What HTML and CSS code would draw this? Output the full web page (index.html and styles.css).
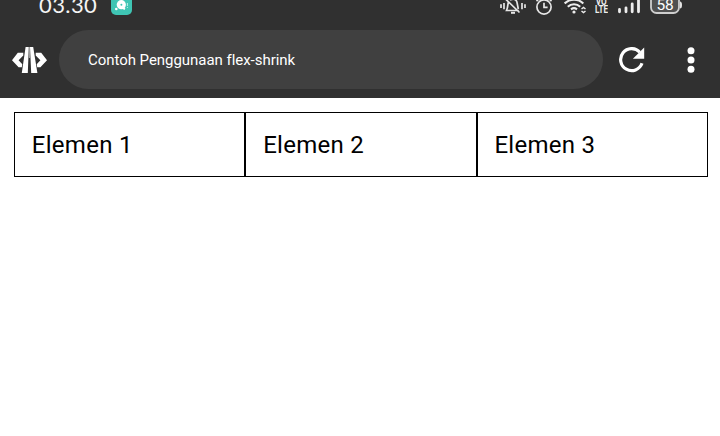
FILE: index.html
```html
<!DOCTYPE html>
<html lang="id">
<head>
<meta charset="utf-8">
<title>Contoh Penggunaan flex-shrink</title>
<link rel="stylesheet" href="styles.css">
</head>
<body>
<header class="browser">
  <div class="status">
    <span class="clock">03.30</span>
    <svg class="app" width="21" height="15" viewBox="0 0 21 15">
      <path d="M0-6H21V10a5 5 0 0 1-5 5H5a5 5 0 0 1-5-5Z" fill="#3fc5b4"/>
      <circle cx="10.3" cy="4.7" r="4.6" fill="#fff"/>
      <path d="M12 8l2 1" stroke="#fff" stroke-width="2"/>
      <circle cx="5.3" cy="9" r="1.3" fill="#fff"/>
      <circle cx="10.4" cy="4.7" r="1" fill="#3fc5b4"/>
      <path d="M16.4 3v3M16.4 7v1" stroke="#bceee5" stroke-width="1"/>
    </svg>
    <div class="indicators">
      <svg width="26" height="20" viewBox="0 0 26 20" fill="none" stroke="#e6e6e6" stroke-width="1.7">
        <path d="M8.5 1.5C7.8 3 8.2 7 6.5 10.5H18.8M10 0C15-2 17 0 17.3 4l1 5M5.5-1 19.5 12.5"/>
        <path d="M11 12.8h4" stroke-width="2"/>
        <path d="M1 4.2v3.7M4 3v6.3M22 3v6.3M25 4.2v3.7"/>
      </svg>
      <svg class="alarm" width="16" height="20" viewBox="0 0 16 20" fill="none" stroke="#e6e6e6" stroke-width="1.7">
        <circle cx="8" cy="7" r="7.1"/>
        <path d="M8 2.8v4.5h3.6M.5 1.2 3-1.2M15.5 1.2 13-1.2"/>
      </svg>
      <svg class="wifi" width="23" height="20" viewBox="0 0 23 20" fill="none" stroke="#ededed" stroke-width="2.1">
        <path d="M.7 3.4C5.8-1.5 14.2-1.5 19.3 3.4M3.8 6.7c3.4-3.3 9-3.3 12.4 0M7 9.3c1.8-1.4 4.2-1.4 6 0"/>
        <circle cx="10" cy="12" r="1.6" fill="#ededed" stroke="none"/>
        <path d="m17.5 9 2-1.6 2 1.6M17.5 11l2 1.6 2-1.6" stroke-width="1.5"/>
      </svg>
      <svg class="volte" width="13" height="20" viewBox="0 0 13 20" fill="#ededed">
        <text x="0.7" y="4.6" textLength="11" lengthAdjust="spacingAndGlyphs">VO</text>
        <text x="0" y="13.4" textLength="13" lengthAdjust="spacingAndGlyphs">LTE</text>
      </svg>
      <svg class="signal" width="22" height="20" viewBox="0 0 22 20" stroke="#ededed" stroke-width="2.8" stroke-linecap="round">
        <path d="M1.5 9.5v2.3M8 7.8v4M14.2 3.8v8M20.5 0v11.8"/>
      </svg>
      <svg class="battery" width="32" height="20" viewBox="0 0 32 20">
        <rect x="1" y="-5" width="28" height="18" rx="5.5" fill="#505050" stroke="#cecece" stroke-width="1.8"/>
        <path d="M30 1.5q2 0 2 3.5t-2 3.5Z" fill="#e3e3e3"/>
        <text x="6.4" y="9.8" textLength="17.4" lengthAdjust="spacingAndGlyphs">58</text>
      </svg>
    </div>
  </div>
  <div class="toolbar">
    <svg class="logo" width="35" height="28" viewBox="0 0 35 28">
      <path d="M5.8 6.8H11.3V9.4L6.6 14.2L10.3 18.2L9.8 21.2H6.6L0 14.2ZM29.2 6.8H23.7V9.4L28.4 14.2L24.7 18.2L25.2 21.2H28.4L35 14.2Z" fill="#fff"/>
      <path d="M13.6 1H16.8L15.8 27H9.8ZM18 1H21.2L25.4 27H19.2Z" fill="#fff"/>
      <path d="M17.4 1V12" stroke="#aaa" stroke-width="1"/>
    </svg>
    <div class="address">Contoh Penggunaan flex-shrink</div>
    <svg class="reload" width="26" height="26" viewBox="0 0 26 26">
      <path d="M20.8 5.2A11 11 0 1 0 23 16.3" fill="none" stroke="#fff" stroke-width="3.2"/>
      <path d="M25.2.5V11.8H13.9Z" fill="#fff"/>
    </svg>
    <svg class="menu" width="8" height="28" viewBox="0 0 8 28" fill="#fff">
      <circle cx="4" cy="4.8" r="3.5"/><circle cx="4" cy="14" r="3.5"/><circle cx="4" cy="23.3" r="3.5"/>
    </svg>
  </div>
</header>
<main class="container">
  <div class="item">Elemen 1</div>
  <div class="item">Elemen 2</div>
  <div class="item">Elemen 3</div>
</main>
</body>
</html>
```
FILE: styles.css
```css
body {
  margin: 0;
  background: #fff;
  color: #000;
  font-family: Roboto, "Liberation Sans", sans-serif;
}

svg {
  display: block;
  flex: none;
}

.browser {
  height: 98px;
  background: #303030;
  overflow: hidden;
}

.status {
  display: flex;
  align-items: flex-start;
  height: 20px;
  padding-left: 39px;
  overflow: hidden;
}

.clock {
  width: 72px;
  margin-top: -7px;
  color: #f4f4f4;
  font: 22px/24px Lato, sans-serif;
  letter-spacing: 0.4px;
}

.indicators {
  display: flex;
  margin-left: 368px;
}

.alarm { margin-left: 10px; }
.wifi { margin-left: 12px; }
.volte { margin-left: 8px; }
.signal { margin-left: 10px; }
.battery { margin-left: 10px; }

.volte text {
  font: bold 10px Roboto, sans-serif;
}

.battery text {
  fill: #fff;
  font: 15.5px Roboto, sans-serif;
}

.toolbar {
  display: flex;
  align-items: center;
  height: 59px;
  margin-top: 10px;
  padding-left: 12px;
}

.address {
  box-sizing: border-box;
  width: 544px;
  height: 59px;
  margin-left: 12px;
  padding-left: 29px;
  border-radius: 30px;
  background: #404040;
  color: #fff;
  font-size: 15px;
  line-height: 60px;
  letter-spacing: -0.04px;
}

.reload { margin-left: 16px; }
.menu { margin-left: 42.4px; }

.container {
  display: flex;
  margin: 14px 12px 0 14px;
}

.item {
  box-sizing: border-box;
  flex: 1 1 0;
  height: 65px;
  padding: 0 16.8px;
  border: 1px solid #000;
  font-size: 24px;
  line-height: 64px;
  letter-spacing: 0.28px;
}
```
